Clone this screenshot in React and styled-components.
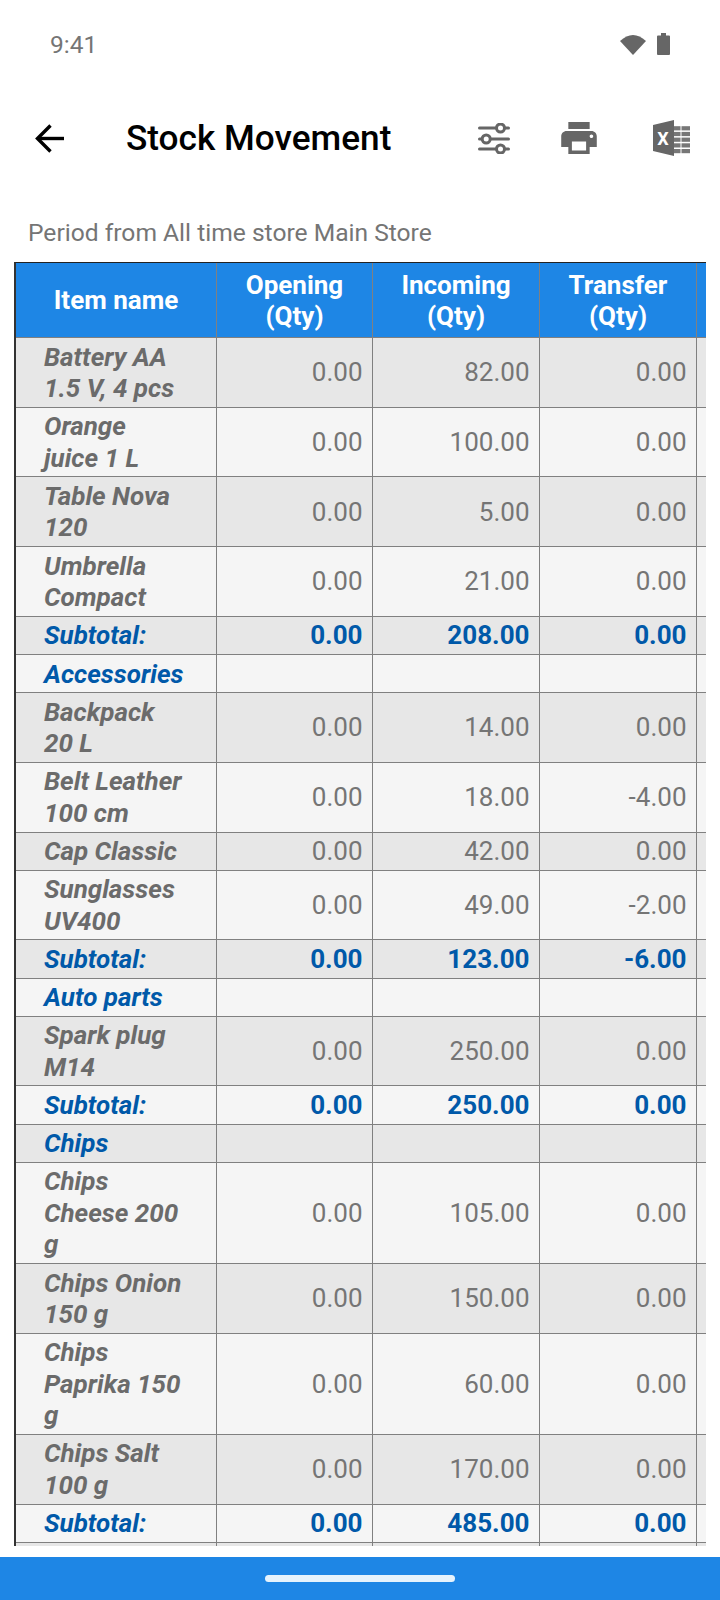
import React from 'react';
import styled, { createGlobalStyle } from 'styled-components';

const Global = createGlobalStyle`
  html, body { margin: 0; padding: 0; background: #fff; }
  body { font-family: Roboto, "Liberation Sans", sans-serif; }
`;

const Page = styled.div`
  width: 720px;
  height: 1600px;
  display: flex;
  flex-direction: column;
  background: #fff;
  overflow: hidden;
`;

const StatusBar = styled.div`
  height: 88px;
  flex: none;
  display: flex;
  align-items: center;
  padding: 0 50px;
  box-sizing: border-box;
`;

const Clock = styled.span`
  font-size: 24.5px;
  color: #757575;
  margin-right: auto;
`;

const StatusIcons = styled.div`
  display: flex;
  align-items: center;
  gap: 11px;
`;

const Toolbar = styled.div`
  height: 100px;
  flex: none;
  display: flex;
  align-items: center;
  padding: 0 30px 0 35px;
  box-sizing: border-box;
`;

const Title = styled.h1`
  margin: 0 0 0 62px;
  font-size: 35.2px;
  font-weight: 500;
  color: #000;
`;

const Actions = styled.div`
  margin-left: auto;
  display: flex;
  align-items: center;
  gap: 51px;
`;

const ExcelWrap = styled.span`
  display: flex;
  margin-left: 5px;
`;

const Period = styled.div`
  height: 74px;
  flex: none;
  padding: 29px 0 0 28px;
  box-sizing: border-box;
  font-size: 24.6px;
  line-height: 32px;
  color: #757575;
`;

const TableWrap = styled.div`
  flex: 1;
  min-height: 0;
  margin: 0 14px 11px;
  overflow: hidden;
`;

const Table = styled.table`
  table-layout: fixed;
  width: 683px;
  border-collapse: separate;
  border-spacing: 0;
  border-top: 1.5px solid #222;
  border-left: 2px solid #333;
  font-size: 26px;
  line-height: 31.5px;
`;

const HeadCell = styled.th`
  background: #1e86e5;
  color: #fff;
  font-weight: 700;
  text-align: center;
  padding: 6.5px 4px 5.5px;
  line-height: 31px;
  border-right: 1px solid #808080;
  border-bottom: 1px solid #808080;
`;

const Row = styled.tr`
  background: ${(p) => (p.$even ? '#e7e7e7' : '#f5f5f5')};
`;

const NameCell = styled.td`
  padding: 3.6px 2px 2.1px 28px;
  font-weight: 700;
  font-style: italic;
  white-space: pre-line;
  color: ${(p) => (p.$accent ? '#0059a9' : '#6b6b6b')};
  border-right: 1px solid #808080;
  border-bottom: 1px solid #808080;
`;

const NumCell = styled.td`
  padding: 3.6px 9.5px 2.1px 4px;
  text-align: right;
  font-weight: ${(p) => (p.$accent ? 700 : 400)};
  color: ${(p) => (p.$accent ? '#0059a9' : '#757575')};
  border-right: 1px solid #808080;
  border-bottom: 1px solid #808080;
`;

const NavBar = styled.div`
  height: 43px;
  flex: none;
  background: #1e86e5;
  display: flex;
  align-items: center;
  justify-content: center;
`;

const Handle = styled.div`
  width: 190px;
  height: 7px;
  border-radius: 4px;
  background: #e6f3fd;
`;

const item = (name, a, b, c) => ({ kind: 'item', name, values: [a, b, c] });
const sub = (a, b, c) => ({ kind: 'sub', name: 'Subtotal:', values: [a, b, c] });
const group = (name) => ({ kind: 'group', name, values: ['', '', ''] });

const rows = [
  item('Battery AA\n1.5 V, 4 pcs', '0.00', '82.00', '0.00'),
  item('Orange\njuice 1 L', '0.00', '100.00', '0.00'),
  item('Table Nova\n120', '0.00', '5.00', '0.00'),
  item('Umbrella\nCompact', '0.00', '21.00', '0.00'),
  sub('0.00', '208.00', '0.00'),
  group('Accessories'),
  item('Backpack\n20 L', '0.00', '14.00', '0.00'),
  item('Belt Leather\n100 cm', '0.00', '18.00', '-4.00'),
  item('Cap Classic', '0.00', '42.00', '0.00'),
  item('Sunglasses\nUV400', '0.00', '49.00', '-2.00'),
  sub('0.00', '123.00', '-6.00'),
  group('Auto parts'),
  item('Spark plug\nM14', '0.00', '250.00', '0.00'),
  sub('0.00', '250.00', '0.00'),
  group('Chips'),
  item('Chips\nCheese 200\ng', '0.00', '105.00', '0.00'),
  item('Chips Onion\n150 g', '0.00', '150.00', '0.00'),
  item('Chips\nPaprika 150\ng', '0.00', '60.00', '0.00'),
  item('Chips Salt\n100 g', '0.00', '170.00', '0.00'),
  sub('0.00', '485.00', '0.00'),
  group('\u00a0'),
];

const ICON = '#666666';

const WifiIcon = () => (
  <svg width="26" height="21" viewBox="0 0 26 21">
    <path d="M0 7 Q13 -5 26 7 L13 21 Z" fill={ICON} />
  </svg>
);

const BatteryIcon = () => (
  <svg width="13" height="22" viewBox="0 0 13 22">
    <path d="M4 0h5v2.5h3a1 1 0 0 1 1 1V21a1 1 0 0 1-1 1H1a1 1 0 0 1-1-1V3.500a1 1 0 0 1 1-1h3z" fill={ICON} />
  </svg>
);

const BackIcon = () => (
  <svg width="29" height="29" viewBox="0 0 29 29" fill="none" stroke="#000" strokeWidth="3.4">
    <path d="M29 14.500H3" />
    <path d="M15.500 1.500L2.500 14.500L15.500 27.500" />
  </svg>
);

const SlidersIcon = () => (
  <svg width="32" height="31" viewBox="0 0 32 31">
    <g stroke={ICON} strokeWidth="3" strokeLinecap="round">
      <path d="M1.500 5H30.500M1.500 16H30.500M1.500 26H30.500" />
    </g>
    <g fill="#fff" stroke={ICON} strokeWidth="3">
      <circle cx="22.500" cy="5" r="4" />
      <circle cx="8.200" cy="16" r="4" />
      <circle cx="22.500" cy="26" r="4" />
    </g>
  </svg>
);

const PrintIcon = () => (
  <svg width="36" height="32" viewBox="2 3 20 18" fill={ICON}>
    <path d="M19 8H5c-1.660 0-3 1.340-3 3v6h4v4h12v-4h4v-6c0-1.660-1.340-3-3-3zm-3 11H8v-5h8v5zm3-7c-.55 0-1-.45-1-1s.45-1 1-1 1 .45 1 1-.45 1-1 1zm-1-9H6v4h12V3z" />
  </svg>
);

const ExcelIcon = () => (
  <svg width="37" height="36" viewBox="0 0 37 36">
    <path d="M0 5L21 0V36L0 31Z" fill={ICON} />
    {[0, 1, 2, 3, 4].map((r) =>
      [0, 1].map((c) => (
        <rect
          key={`${r}-${c}`}
          x={c === 0 ? 21 : 28.500}
          y={6.200 + r * 5.700}
          width={c === 0 ? 6.500 : 8.500}
          height="4.200"
          fill="#777777"
        />
      ))
    )}
    <text x="10" y="25" textAnchor="middle" fontFamily="Roboto, sans-serif" fontWeight="700" fontSize="18" fill="#fff">X</text>
  </svg>
);

export default function App() {
  return (
    <Page>
      <Global />
      <StatusBar>
        <Clock>9:41</Clock>
        <StatusIcons>
          <WifiIcon />
          <BatteryIcon />
        </StatusIcons>
      </StatusBar>
      <Toolbar>
        <BackIcon />
        <Title>Stock Movement</Title>
        <Actions>
          <SlidersIcon />
          <PrintIcon />
          <ExcelWrap>
            <ExcelIcon />
          </ExcelWrap>
        </Actions>
      </Toolbar>
      <Period>Period from All time store Main Store</Period>
      <TableWrap>
        <Table>
          <colgroup>
            <col style={{ width: 201 }} />
            <col style={{ width: 156 }} />
            <col style={{ width: 167 }} />
            <col style={{ width: 157 }} />
            <col style={{ width: 100 }} />
          </colgroup>
          <thead>
            <tr>
              <HeadCell>Item name</HeadCell>
              <HeadCell>Opening<br />(Qty)</HeadCell>
              <HeadCell>Incoming<br />(Qty)</HeadCell>
              <HeadCell>Transfer<br />(Qty)</HeadCell>
              <HeadCell />
            </tr>
          </thead>
          <tbody>
            {rows.map((row, i) => {
              const accent = row.kind !== 'item';
              return (
                <Row key={i} $even={i % 2 === 0}>
                  <NameCell $accent={accent}>{row.name}</NameCell>
                  {row.values.map((v, j) => (
                    <NumCell key={j} $accent={accent}>{v}</NumCell>
                  ))}
                  <NumCell />
                </Row>
              );
            })}
          </tbody>
        </Table>
      </TableWrap>
      <NavBar>
        <Handle />
      </NavBar>
    </Page>
  );
}
